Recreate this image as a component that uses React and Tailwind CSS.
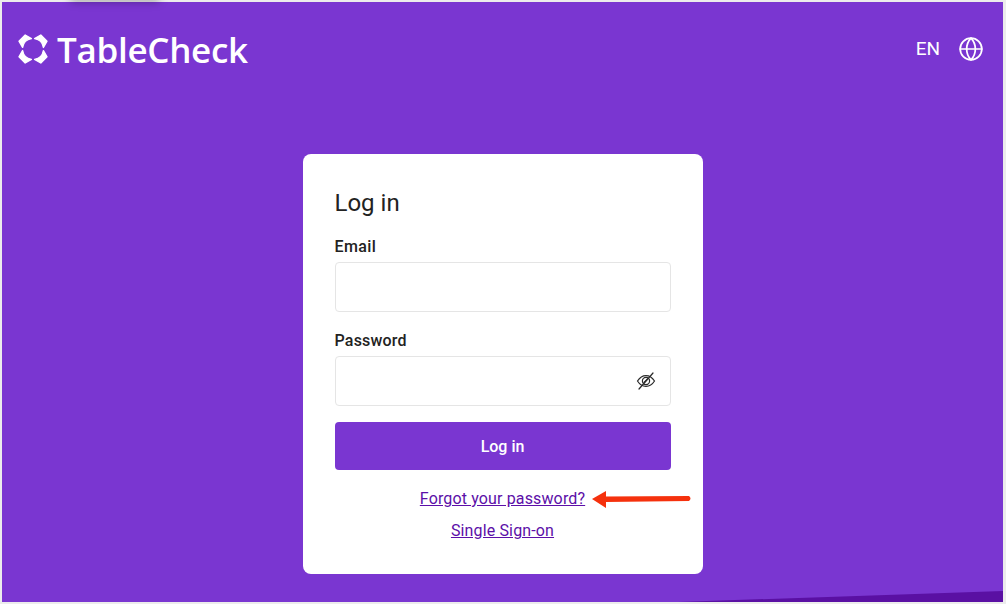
import { Globe } from 'lucide-react';

function Logo() {
  const petal = 'M22.8 1 L29 7.2 L25.4 13.4 A10.5 10.5 0 0 0 16.6 4.6 Z';
  return (
    <svg width="30" height="30" viewBox="0 0 30 30" fill="white" stroke="white" strokeWidth="1.4" strokeLinejoin="round">
      <path d={petal} />
      <path d={petal} transform="rotate(90 15 15)" />
      <path d={petal} transform="rotate(180 15 15)" />
      <path d={petal} transform="rotate(270 15 15)" />
    </svg>
  );
}

function EyeOff() {
  return (
    <svg width="20" height="20" viewBox="0 0 20 20" fill="none" stroke="#2a2a2a" strokeWidth="1.2" strokeLinecap="round">
      <path d="M1.5 10 C4 6 7 4.6 10 4.6 C13 4.6 16 6 18.5 10 C16 14 13 15.4 10 15.4 C7 15.4 4 14 1.5 10 Z" />
      <circle cx="10" cy="10" r="3.6" />
      <path d="M3 18 L17 2" />
      <path d="M8 11.5 L11.5 8" />
    </svg>
  );
}

export default function App() {
  return (
    <div className="relative h-[604px] w-[1006px] overflow-hidden bg-[#ececec] p-[2px] pr-[3px] font-['Roboto',sans-serif]">
      <div className="relative flex h-[600px] flex-col items-center bg-[#7a36d1]">
        <header className="flex h-[96px] w-full items-center justify-between pb-[2px] pl-[16px] pr-[19px]">
          <div className="flex items-center gap-[9px]">
            <Logo />
            <span className="font-['Open_Sans',sans-serif] text-[35px] font-semibold leading-none tracking-[-0.3px] text-white">TableCheck</span>
          </div>
          <div className="flex items-center gap-[18px] text-white">
            <span className="mb-[2px] text-[19px] leading-none">EN</span>
            <Globe size={26} strokeWidth={1.6} />
          </div>
        </header>

        {/* Login card */}
        <div className="z-10 mt-[56px] flex h-[420px] w-[400px] flex-col rounded-[8px] bg-white px-[32px] pt-[33px] text-[#222222]">
          <h1 className="text-[24px] leading-[32px]">Log in</h1>
          <label className="mt-[16px] text-[16px] font-medium leading-[24px] tracking-[0.4px]">Email</label>
          <input className="mt-[3px] h-[50px] w-full rounded-[4px] border border-[#e5e5e5] outline-none" />
          <label className="mt-[17px] text-[16px] font-medium leading-[24px] tracking-[0.2px]">Password</label>
          <div className="relative mt-[3px]">
            <input className="h-[50px] w-full rounded-[4px] border border-[#e5e5e5] outline-none" />
            <span className="absolute right-[15px] top-[15px]"><EyeOff /></span>
          </div>
          <button className="mt-[16px] h-[48px] w-full rounded-[4px] bg-[#7a36d1] pt-[2px] text-[16px] font-medium text-white">Log in</button>
          <div className="mt-[17px] flex flex-col items-center gap-[8px] text-[16px] leading-[24px] tracking-[0.14px] text-[#5c0fa8]">
            <a className="underline">Forgot your password?</a>
            <a className="underline">Single Sign-on</a>
          </div>
        </div>

        {/* annotation arrow */}
        <svg className="absolute left-[588px] top-[486px] z-20" width="104" height="22" viewBox="0 0 104 22">
          <path d="M2 11 L16 3 L16 8.4 L99 8 Q102 10.5 99 13 L16 14 L16 20 Z" fill="#f5310d" />
        </svg>

        {/* corner wedge */}
        <svg className="absolute bottom-0 right-0" width="325" height="11" viewBox="0 0 325 11">
          <path d="M0 11 L325 0 L325 11 Z" fill="#5a10a3" />
        </svg>
      </div>

      {/* smudge on the top edge */}
      <div className="absolute left-[70px] top-[-6px] h-[8px] w-[90px] rounded-full bg-black/30 blur-[4px]" />
    </div>
  );
}
